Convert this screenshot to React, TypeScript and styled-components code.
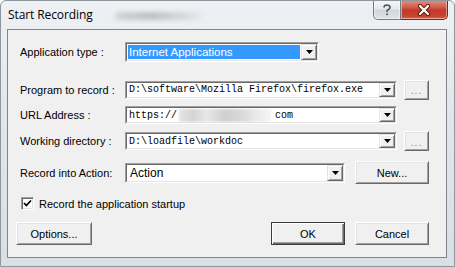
import React from 'react';
import styled, { createGlobalStyle } from 'styled-components';

const GlobalStyle = createGlobalStyle`
    html, body {
        margin: 0;
        padding: 0;
        background: #ffffff;
    }
    * {
        box-sizing: border-box;
    }
`;

const Window = styled.div`
    width: 455px;
    height: 267px;
    overflow: hidden;
    display: flex;
    flex-direction: column;
    border: 1px solid #8e969e;
    border-radius: 6px 6px 0 0;
    background: linear-gradient(180deg, #eef1f4 0%, #e3e7eb 40%, #dadfe4 100%);
    font-family: "Liberation Sans", Arial, sans-serif;
`;

const TitleBar = styled.div`
    height: 28px;
    display: flex;
    align-items: flex-start;
    padding: 0 6px 0 7px;
`;

const Title = styled.div`
    font-family: "Open Sans", "Noto Sans", sans-serif;
    font-size: 12px;
    color: #000;
    line-height: 28px;
    letter-spacing: -0.1px;
`;

const GlassSmudge = styled.div`
    width: 90px;
    height: 8px;
    margin: 11px 0 0 22px;
    border-radius: 4px;
    background: linear-gradient(90deg, rgba(150,150,150,0.3), rgba(120,120,120,0.4) 40%, rgba(160,160,160,0.25) 80%, transparent);
    filter: blur(2px);
`;

const Caption = styled.div`
    margin-left: auto;
    display: flex;
    margin-top: -1px;
`;

const CaptionBtn = styled.div<{ $w: number; $close?: boolean }>`
    width: ${(p) => p.$w}px;
    height: 20px;
    display: flex;
    align-items: center;
    justify-content: center;
    border: 1px solid ${(p) => (p.$close ? '#6a2a23' : '#737b84')};
    border-top: none;
    border-left-width: ${(p) => (p.$close ? 0 : 1)}px;
    border-radius: ${(p) => (p.$close ? '0 0 5px 0' : '0 0 0 5px')};
    background: ${(p) =>
        p.$close
            ? 'linear-gradient(180deg, #e39484 0%, #d2604e 35%, #c0392a 55%, #c8432f 85%, #d86a52 100%)'
            : 'linear-gradient(180deg, #f7f8f9 0%, #e6e9ec 45%, #d2d7dc 55%, #dfe3e7 100%)'};
    box-shadow: inset 0 0 0 1px rgba(255, 255, 255, 0.45);
`;

const ClientArea = styled.div`
    flex: 1;
    margin: 0 7px 8px 6px;
    border: 1px solid #80868d;
    background: #f0f0f0;
    display: flex;
    flex-direction: column;
    padding: 0 17px 0 12px;
`;

const Row = styled.div<{ $mt: number; $h: number }>`
    margin-top: ${(p) => p.$mt}px;
    height: ${(p) => p.$h}px;
    display: flex;
    align-items: center;
`;

const Label = styled.div`
    width: 105px;
    font-size: 11px;
    color: #000;
    white-space: nowrap;
`;

const Combo = styled.div<{ $w: number; $h: number }>`
    width: ${(p) => p.$w}px;
    height: ${(p) => p.$h}px;
    border: 1px solid;
    border-color: #a0a0a0 #ffffff #ffffff #a0a0a0;
    display: flex;
`;

const ComboInner = styled.div`
    flex: 1;
    display: flex;
    border: 1px solid;
    border-color: #696969 #e3e3e3 #e3e3e3 #696969;
    background: #fff;
    min-width: 0;
`;

const Field = styled.div<{ $mono?: boolean }>`
    flex: 1;
    display: flex;
    align-items: center;
    padding-left: ${(p) => (p.$mono ? 2 : 3)}px;
    font-family: ${(p) => (p.$mono ? '"Liberation Mono", "Courier New", monospace' : '"Liberation Sans", Arial, sans-serif')};
    font-size: ${(p) => (p.$mono ? 10 : 12)}px;
    color: #000;
    white-space: nowrap;
    overflow: hidden;
`;

const Highlight = styled.div`
    flex: 1;
    align-self: stretch;
    margin: 1px;
    background: #3399ff;
    color: #fff;
    font-size: 11.5px;
    display: flex;
    align-items: center;
    padding-left: 1px;
`;

const Blurred = styled.span`
    display: inline-block;
    width: 92px;
    height: 13px;
    margin: 0 4px 0 2px;
    background: linear-gradient(90deg, #e4e4e4 0%, #d4d4d4 15%, #e8e8e8 30%, #cfcfcf 50%, #dadada 70%, #ebebeb 85%, #f4f4f4 100%);
    filter: blur(1px);
`;

const ArrowBtn = styled.div`
    width: 16px;
    display: flex;
    align-items: center;
    justify-content: center;
    background: #f0f0f0;
    border: 1px solid;
    border-color: #e3e3e3 #696969 #696969 #e3e3e3;
    box-shadow: inset 1px 1px #ffffff, inset -1px -1px #a0a0a0;
`;

const Button = styled.div<{ $w: number; $h: number; $default?: boolean }>`
    width: ${(p) => p.$w}px;
    height: ${(p) => p.$h}px;
    display: flex;
    align-items: center;
    justify-content: center;
    background: #f0f0f0;
    font-size: 11px;
    color: #000;
    border: 1px solid;
    border-color: ${(p) => (p.$default ? '#3c3c3c' : '#ffffff #696969 #696969 #ffffff')};
    box-shadow: ${(p) =>
        p.$default
            ? 'inset 1px 1px #ffffff, inset -1px -1px #696969, inset -2px -2px #a0a0a0'
            : 'inset 1px 1px #e3e3e3, inset -1px -1px #a0a0a0'};
`;

const Dots = styled.span`
    color: #808080;
    font-size: 10px;
    letter-spacing: 1px;
    margin-top: 2px;
`;

const Spacer = styled.div<{ $w: number }>`
    width: ${(p) => p.$w}px;
    flex: none;
`;

const CheckRow = styled(Row)`
    padding-left: 1px;
`;

const CheckBox = styled.div`
    width: 13px;
    height: 13px;
    border: 1px solid;
    border-color: #a0a0a0 #ffffff #ffffff #a0a0a0;
    box-shadow: inset 1px 1px #696969, inset -1px -1px #e3e3e3;
    background: #fff;
    display: flex;
    align-items: center;
    justify-content: center;
`;

const CheckText = styled.span`
    margin-left: 5px;
    font-size: 11px;
    color: #000;
`;

const ButtonBar = styled(Row)`
    margin-left: -4px;
`;

const Arrow = () => (
    <svg width="7" height="4" viewBox="0 0 7 4">
        <polygon points="0,0 7,0 3.5,4" fill="#000" />
    </svg>
);

const ComboBox: React.FC<{ w: number; h: number; children: React.ReactNode }> = ({ w, h, children }) => (
    <Combo $w={w} $h={h}>
        <ComboInner>
            {children}
            <ArrowBtn>
                <Arrow />
            </ArrowBtn>
        </ComboInner>
    </Combo>
);

const Browse = () => (
    <Button $w={25} $h={20}>
        <Dots>...</Dots>
    </Button>
);

export default function App() {
    return (
        <>
            <GlobalStyle />
            <Window>
                <TitleBar>
                    <Title>Start Recording</Title>
                    <GlassSmudge />
                    <Caption>
                        <CaptionBtn $w={28}>
                            <svg width="10" height="12" viewBox="0 0 10 12">
                                <path d="M2 3.5 C2 1.5 3.5 1 5 1 C6.8 1 8 2 8 3.5 C8 5 6.5 5.5 5.5 6.2 C5 6.6 5 7 5 8" stroke="#4a5560" strokeWidth="1.6" fill="none" />
                                <rect x="4.2" y="9.4" width="1.7" height="1.7" fill="#4a5560" />
                            </svg>
                        </CaptionBtn>
                        <CaptionBtn $w={47} $close>
                            <svg width="14" height="12" viewBox="0 0 14 12">
                                <path d="M3 2 L11 10 M11 2 L3 10" stroke="#5a1a12" strokeWidth="4" strokeLinecap="round" />
                                <path d="M3 2 L11 10 M11 2 L3 10" stroke="#ffffff" strokeWidth="2.2" strokeLinecap="round" />
                            </svg>
                        </CaptionBtn>
                    </Caption>
                </TitleBar>

                <ClientArea>
                    <Row $mt={11} $h={21}>
                        <Label>Application type :</Label>
                        <Combo $w={194} $h={20}>
                            <ComboInner>
                                <Highlight>Internet Applications</Highlight>
                                <ArrowBtn>
                                    <Arrow />
                                </ArrowBtn>
                            </ComboInner>
                        </Combo>
                    </Row>

                    <Row $mt={18} $h={19}>
                        <Label>Program to record :</Label>
                        <ComboBox w={272} h={18}>
                            <Field $mono>D:\software\Mozilla Firefox\firefox.exe</Field>
                        </ComboBox>
                        <Spacer $w={7} />
                        <Browse />
                    </Row>

                    <Row $mt={7} $h={18}>
                        <Label>URL Address :</Label>
                        <ComboBox w={272} h={18}>
                            <Field $mono>
                                https://
                                <Blurred />
                                com
                            </Field>
                        </ComboBox>
                    </Row>

                    <Row $mt={7} $h={20}>
                        <Label>Working directory :</Label>
                        <ComboBox w={272} h={18}>
                            <Field $mono>D:\loadfile\workdoc</Field>
                        </ComboBox>
                        <Spacer $w={7} />
                        <Browse />
                    </Row>

                    <Row $mt={10} $h={23}>
                        <Label>Record into Action:</Label>
                        <ComboBox w={220} h={20}>
                            <Field>Action</Field>
                        </ComboBox>
                        <Spacer $w={10} />
                        <Button $w={74} $h={23}>New...</Button>
                    </Row>

                    <CheckRow $mt={13} $h={13}>
                        <CheckBox>
                            <svg width="9" height="9" viewBox="0 0 9 9">
                                <path d="M1 4 L3.3 6.5 L8 1.5" stroke="#000" strokeWidth="1.8" fill="none" />
                            </svg>
                        </CheckBox>
                        <CheckText>Record the application startup</CheckText>
                    </CheckRow>

                    <ButtonBar $mt={12} $h={23}>
                        <Button $w={76} $h={23}>Options...</Button>
                        <Spacer $w={179} />
                        <Button $w={74} $h={23} $default>OK</Button>
                        <Spacer $w={10} />
                        <Button $w={74} $h={23}>Cancel</Button>
                    </ButtonBar>
                </ClientArea>
            </Window>
        </>
    );
}
